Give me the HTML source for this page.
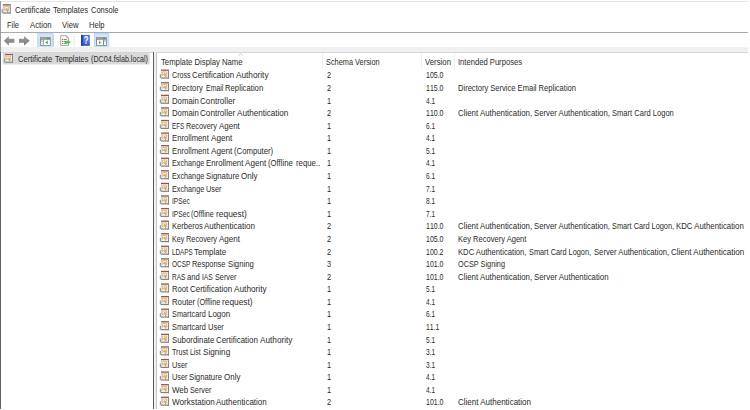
<!DOCTYPE html>
<html><head><meta charset="utf-8"><title>Certificate Templates Console</title>
<style>
html,body{margin:0;padding:0;background:#fff;}
body{width:750px;height:410px;position:relative;overflow:hidden;font-family:"Liberation Sans",sans-serif;font-size:8.2px;color:#2a2a2a;}
.abs{position:absolute;}
.c3{font-kerning:none}
.cl{position:absolute;left:0;width:750px}
.cl .t{top:0}
.t{position:absolute;white-space:nowrap;line-height:12px;height:12px;transform-origin:0 50%;}
svg{display:block}
</style></head><body>
<div class="abs" style="left:0;top:1px;width:748px;height:1px;background:#e4e4e4"></div>
<div class="abs" style="left:0;top:1px;width:1px;height:51px;background:#9c9c9c"></div>
<div class="abs" style="left:0;top:52px;width:1px;height:356.500px;background:#5f6368"></div>
<!-- title -->

<div class="cl " style="top:4px;height:12px"><span class="t" style="left:15.10px;font-size:8.7px;line-height:12px;height:12px;transform:scaleX(0.9026)">Certificate</span> <span class="t" style="left:53.40px;font-size:8.7px;line-height:12px;height:12px;transform:scaleX(0.8840)">Templates</span> <span class="t" style="left:91.40px;font-size:8.7px;line-height:12px;height:12px;transform:scaleX(0.8627)">Console</span></div>
<!-- menu -->
<div class="t " style="left:7.40px;top:20px;font-size:8.2px;line-height:11px;height:11px;transform:scaleX(0.9089)">File</div>
<div class="t " style="left:29.90px;top:20px;font-size:8.2px;line-height:11px;height:11px;transform:scaleX(0.9444)">Action</div>
<div class="t " style="left:61.90px;top:20px;font-size:8.2px;line-height:11px;height:11px;transform:scaleX(0.9370)">View</div>
<div class="t " style="left:88.90px;top:20px;font-size:8.2px;line-height:11px;height:11px;transform:scaleX(0.9202)">Help</div>
<div class="abs" style="left:1px;top:32px;width:747px;height:1px;background:#a9a9ae"></div>
<!-- toolbar -->
<svg class="abs" style="left:0;top:33px" width="120" height="16" viewBox="0 0 120 16">
 <defs><linearGradient id="ga" x1="0" y1="0" x2="0" y2="1"><stop offset="0" stop-color="#a0a0a0"/><stop offset="1" stop-color="#7a7a7a"/></linearGradient>
 <linearGradient id="gh" x1="0" y1="0" x2="0" y2="1"><stop offset="0" stop-color="#4a6edc"/><stop offset=".6" stop-color="#5278e2"/><stop offset="1" stop-color="#2c48a8"/></linearGradient></defs>
 <path d="M3.800 7.800l5-4.800v2.800h5.600v4h-5.600v2.800z" fill="url(#ga)"/>
 <path d="M29.800 7.800l-5.800-4.800v2.800h-5v4h5v2.800z" fill="url(#ga)"/>
 <rect x="33" y="1.500" width=".8" height="12.500" fill="#f0f0f0"/>
 <rect x="37.600" y="0.600" width="15" height="13.500" fill="#cfe6f9" stroke="#bcdcf6" stroke-width="1"/>
 <rect x="53.300" y="1.500" width=".7" height="12" fill="#b9b9b9"/>
 <rect x="40" y="4.200" width="10.700" height="8.600" fill="#85888c"/>
 <rect x="40.800" y="4.900" width="9.100" height="2" fill="#a3a5a8"/>
 <rect x="46.800" y="5.300" width="2.600" height=".7" fill="#5c6068"/>
 <rect x="40.900" y="7.100" width="2.300" height="4.900" fill="#fafcff"/>
 <rect x="43.900" y="7.100" width="6" height="4.900" fill="#ffffff"/>
 <rect x="41.300" y="7.700" width="1.400" height=".9" fill="#3a78d8"/><rect x="41.600" y="10.600" width="1.100" height=".9" fill="#9cc2f0"/>
 <path d="M45.300 9.400l2.500-1.800v3.600z" fill="#38b838"/>
 <path d="M60.700 2.600h5.800l2 2.100v7.900h-7.800z" fill="#fdf9e2" stroke="#a2a2a0" stroke-width=".9"/>
 <path d="M66.500 2.600v2.100h2" fill="none" stroke="#b0b0ae" stroke-width=".7"/>
 <path d="M62.100 6.500h.9M62.100 8.500h.9M62.100 10.400h.9" stroke="#55555c" stroke-width=".9"/>
 <path d="M63.700 6.500h3M63.700 8.500h3M63.700 10.400h3" stroke="#5a64a8" stroke-width=".8"/>
 <path d="M64.800 8h2.900v-1.300l3 2.400-3 2.400v-1.300h-2.900z" fill="#48c448"/>
 <rect x="73.800" y="1.200" width=".8" height="12.700" fill="#e2e2e2"/>
 <rect x="81" y="1.900" width="8.800" height="10.900" fill="url(#gh)"/>
 <rect x="81" y="1.900" width="1.900" height="10.900" fill="#2342b4"/>
 <text x="0" y="0" transform="translate(86.200 11.300) scale(.7 1)" font-size="11" font-weight="bold" text-anchor="middle" fill="#fff" font-family="Liberation Sans, sans-serif">?</text>
 <rect x="94.400" y="0.600" width="14.400" height="13.500" fill="#cfe6f9" stroke="#b4d8f6" stroke-width="1"/>
 <rect x="96" y="4.200" width="10.800" height="8.600" fill="#85888c"/>
 <rect x="96.800" y="4.900" width="9.200" height="2" fill="#a3a5a8"/>
 <rect x="102.800" y="5.300" width="2.600" height=".7" fill="#5c6068"/>
 <rect x="97" y="7.100" width="6" height="4.900" fill="#ffffff"/>
 <rect x="104" y="7.100" width="2" height="4.900" fill="#fafcff"/>
 <rect x="104.200" y="7.500" width="1.600" height="1" fill="#6a9ae4"/>
 <path d="M101.100 9.600l-2.100-1.900v3.800z" fill="#38b838"/>
</svg>
<div class="abs" style="left:1px;top:47px;width:747px;height:5px;background:#f0f0f0"></div>
<div class="abs" style="left:1px;top:52px;width:747px;height:1px;background:#d6d6da"></div>
<!-- tree -->
<svg class="abs" style="left:0;top:50px" width="152" height="16" viewBox="0 50 152 16"><rect x="2.900" y="52.900" width="146.800" height="11.600" fill="#d9d9d9"/></svg>

<div class="cl " style="top:54px;height:11px"><span class="t" style="left:17.90px;font-size:8.2px;line-height:11px;height:11px;transform:scaleX(0.9279)">Certificate</span> <span class="t" style="left:54.90px;font-size:8.2px;line-height:11px;height:11px;transform:scaleX(0.8921)">Templates</span> <span class="t" style="left:90.60px;font-size:8.2px;line-height:11px;height:11px;transform:scaleX(0.8759)">(DC04.fslab.local)</span></div>
<!-- splitter -->
<div class="abs" style="left:153px;top:52px;width:1px;height:356.500px;background:#5c5c60"></div>
<div class="abs" style="left:154px;top:52px;width:2px;height:356.500px;background:#f0f0f0"></div>
<div class="abs" style="left:156px;top:52px;width:1px;height:356.500px;background:#c2c6cc"></div>
<!-- header -->
<div class="abs" style="left:322px;top:53px;width:1px;height:16px;background:#efefef"></div>
<div class="abs" style="left:421px;top:53px;width:1px;height:16px;background:#efefef"></div>
<div class="abs" style="left:454px;top:53px;width:1px;height:16px;background:#efefef"></div>
<div class="t " style="left:160.50px;top:57px;font-size:8.2px;line-height:11px;height:11px;transform:scaleX(0.9437)">Template Display Name</div>
<div class="t " style="left:326.20px;top:57px;font-size:8.2px;line-height:11px;height:11px;transform:scaleX(0.9006)">Schema Version</div>
<div class="t " style="left:424.70px;top:57px;font-size:8.2px;line-height:11px;height:11px;transform:scaleX(0.9519)">Version</div>
<div class="t " style="left:458.40px;top:57px;font-size:8.2px;line-height:11px;height:11px;transform:scaleX(0.9311)">Intended Purposes</div>
<svg class="abs" style="left:237.500px;top:53.200px" width="5" height="3" viewBox="0 0 5 3"><path d="M.4 2.600l2.100-2 2.100 2" fill="none" stroke="#c2c2c2" stroke-width=".8"/></svg>
<div class="cl c1" style="top:70px;height:11px"><span class="t" style="left:171.60px;font-size:8.2px;line-height:11px;height:11px;transform:scaleX(0.8742)">Cross</span> <span class="t" style="left:192.40px;font-size:8.2px;line-height:11px;height:11px;transform:scaleX(0.9761)">Certification</span> <span class="t" style="left:235.90px;font-size:8.2px;line-height:11px;height:11px;transform:scaleX(1.0058)">Authority</span></div>
<div class="t c2" style="left:326.70px;top:70px;font-size:8.2px;line-height:11px;height:11px;transform:scaleX(0.8986)">2</div>
<div class="t c3" style="left:425.50px;top:70px;font-size:8.2px;line-height:11px;height:11px;transform:scaleX(0.8537)">105.0</div>
<div class="cl c1" style="top:83px;height:11px"><span class="t" style="left:171.60px;font-size:8.2px;line-height:11px;height:11px;transform:scaleX(0.9400)">Directory</span> <span class="t" style="left:205.60px;font-size:8.2px;line-height:11px;height:11px;transform:scaleX(0.8494)">Email</span> <span class="t" style="left:225.20px;font-size:8.2px;line-height:11px;height:11px;transform:scaleX(0.9428)">Replication</span></div>
<div class="t c2" style="left:326.70px;top:83px;font-size:8.2px;line-height:11px;height:11px;transform:scaleX(0.8986)">2</div>
<div class="t c3" style="left:425.50px;top:83px;font-size:8.2px;line-height:11px;height:11px;transform:scaleX(0.8537)">115.0</div>
<div class="t c4" style="left:458.40px;top:83px;font-size:8.2px;line-height:11px;height:11px;transform:scaleX(0.9229)">Directory Service Email Replication</div>
<div class="cl c1" style="top:96px;height:11px"><span class="t" style="left:171.60px;font-size:8.2px;line-height:11px;height:11px;transform:scaleX(0.9497)">Domain</span> <span class="t" style="left:200.20px;font-size:8.2px;line-height:11px;height:11px;transform:scaleX(0.9915)">Controller</span></div>
<div class="t c2" style="left:326.70px;top:96px;font-size:8.2px;line-height:11px;height:11px;transform:scaleX(0.8986)">1</div>
<div class="t c3" style="left:425.50px;top:96px;font-size:8.2px;line-height:11px;height:11px;transform:scaleX(0.7989)">4.1</div>
<div class="cl c1" style="top:108px;height:11px"><span class="t" style="left:171.60px;font-size:8.2px;line-height:11px;height:11px;transform:scaleX(0.9497)">Domain</span> <span class="t" style="left:200.20px;font-size:8.2px;line-height:11px;height:11px;transform:scaleX(0.9915)">Controller</span> <span class="t" style="left:236.60px;font-size:8.2px;line-height:11px;height:11px;transform:scaleX(0.9902)">Authentication</span></div>
<div class="t c2" style="left:326.70px;top:108px;font-size:8.2px;line-height:11px;height:11px;transform:scaleX(0.8986)">2</div>
<div class="t c3" style="left:425.50px;top:108px;font-size:8.2px;line-height:11px;height:11px;transform:scaleX(0.8537)">110.0</div>
<div class="cl c4" style="top:108px;height:11px"><span class="t" style="left:458.30px;font-size:8.2px;line-height:11px;height:11px;transform:scaleX(0.9633)">Client Authentication,</span> <span class="t" style="left:533.90px;font-size:8.2px;line-height:11px;height:11px;transform:scaleX(0.9475)">Server Authentication,</span> <span class="t" style="left:611.70px;font-size:8.2px;line-height:11px;height:11px;transform:scaleX(0.9237)">Smart Card Logon</span></div>
<div class="cl c1" style="top:121px;height:11px"><span class="t" style="left:171.60px;font-size:8.2px;line-height:11px;height:11px;transform:scaleX(0.7655)">EFS</span> <span class="t" style="left:185.60px;font-size:8.2px;line-height:11px;height:11px;transform:scaleX(0.8903)">Recovery</span> <span class="t" style="left:218.60px;font-size:8.2px;line-height:11px;height:11px;transform:scaleX(0.9717)">Agent</span></div>
<div class="t c2" style="left:326.70px;top:121px;font-size:8.2px;line-height:11px;height:11px;transform:scaleX(0.8986)">1</div>
<div class="t c3" style="left:425.50px;top:121px;font-size:8.2px;line-height:11px;height:11px;transform:scaleX(0.7989)">6.1</div>
<div class="cl c1" style="top:133px;height:11px"><span class="t" style="left:171.60px;font-size:8.2px;line-height:11px;height:11px;transform:scaleX(0.9402)">Enrollment</span> <span class="t" style="left:210.60px;font-size:8.2px;line-height:11px;height:11px;transform:scaleX(0.9997)">Agent</span></div>
<div class="t c2" style="left:326.70px;top:133px;font-size:8.2px;line-height:11px;height:11px;transform:scaleX(0.8986)">1</div>
<div class="t c3" style="left:425.50px;top:133px;font-size:8.2px;line-height:11px;height:11px;transform:scaleX(0.7989)">4.1</div>
<div class="cl c1" style="top:146px;height:11px"><span class="t" style="left:171.60px;font-size:8.2px;line-height:11px;height:11px;transform:scaleX(0.9402)">Enrollment</span> <span class="t" style="left:210.60px;font-size:8.2px;line-height:11px;height:11px;transform:scaleX(0.9997)">Agent</span> <span class="t" style="left:233.60px;font-size:8.2px;line-height:11px;height:11px;transform:scaleX(0.9467)">(Computer)</span></div>
<div class="t c2" style="left:326.70px;top:146px;font-size:8.2px;line-height:11px;height:11px;transform:scaleX(0.8986)">1</div>
<div class="t c3" style="left:425.50px;top:146px;font-size:8.2px;line-height:11px;height:11px;transform:scaleX(0.7989)">5.1</div>
<div class="cl c1" style="top:158px;height:11px"><span class="t" style="left:171.60px;font-size:8.2px;line-height:11px;height:11px;transform:scaleX(0.8841)">Exchange</span> <span class="t" style="left:206.00px;font-size:8.2px;line-height:11px;height:11px;transform:scaleX(0.9555)">Enrollment</span> <span class="t" style="left:245.20px;font-size:8.2px;line-height:11px;height:11px;transform:scaleX(0.9904)">Agent</span> <span class="t" style="left:268.00px;font-size:8.2px;line-height:11px;height:11px;transform:scaleX(0.9448)">(Offline</span> <span class="t" style="left:296.20px;font-size:8.2px;line-height:11px;height:11px;transform:scaleX(0.9490)">reque..</span></div>
<div class="t c2" style="left:326.70px;top:158px;font-size:8.2px;line-height:11px;height:11px;transform:scaleX(0.8986)">1</div>
<div class="t c3" style="left:425.50px;top:158px;font-size:8.2px;line-height:11px;height:11px;transform:scaleX(0.7989)">4.1</div>
<div class="cl c1" style="top:171px;height:11px"><span class="t" style="left:171.60px;font-size:8.2px;line-height:11px;height:11px;transform:scaleX(0.8841)">Exchange</span> <span class="t" style="left:206.00px;font-size:8.2px;line-height:11px;height:11px;transform:scaleX(0.9526)">Signature</span> <span class="t" style="left:241.20px;font-size:8.2px;line-height:11px;height:11px;transform:scaleX(0.9855)">Only</span></div>
<div class="t c2" style="left:326.70px;top:171px;font-size:8.2px;line-height:11px;height:11px;transform:scaleX(0.8986)">1</div>
<div class="t c3" style="left:425.50px;top:171px;font-size:8.2px;line-height:11px;height:11px;transform:scaleX(0.7989)">6.1</div>
<div class="cl c1" style="top:184px;height:11px"><span class="t" style="left:171.60px;font-size:8.2px;line-height:11px;height:11px;transform:scaleX(0.8841)">Exchange</span> <span class="t" style="left:206.00px;font-size:8.2px;line-height:11px;height:11px;transform:scaleX(0.8903)">User</span></div>
<div class="t c2" style="left:326.70px;top:184px;font-size:8.2px;line-height:11px;height:11px;transform:scaleX(0.8986)">1</div>
<div class="t c3" style="left:425.50px;top:184px;font-size:8.2px;line-height:11px;height:11px;transform:scaleX(0.7989)">7.1</div>
<div class="cl c1" style="top:196px;height:11px"><span class="t" style="left:171.60px;font-size:8.2px;line-height:11px;height:11px;transform:scaleX(0.8143)">IPSec</span></div>
<div class="t c2" style="left:326.70px;top:196px;font-size:8.2px;line-height:11px;height:11px;transform:scaleX(0.8986)">1</div>
<div class="t c3" style="left:425.50px;top:196px;font-size:8.2px;line-height:11px;height:11px;transform:scaleX(0.7989)">8.1</div>
<div class="cl c1" style="top:209px;height:11px"><span class="t" style="left:171.60px;font-size:8.2px;line-height:11px;height:11px;transform:scaleX(0.8143)">IPSec</span> <span class="t" style="left:191.20px;font-size:8.2px;line-height:11px;height:11px;transform:scaleX(0.8610)">(Offline</span> <span class="t" style="left:216.20px;font-size:8.2px;line-height:11px;height:11px;transform:scaleX(1.0251)">request)</span></div>
<div class="t c2" style="left:326.70px;top:209px;font-size:8.2px;line-height:11px;height:11px;transform:scaleX(0.8986)">1</div>
<div class="t c3" style="left:425.50px;top:209px;font-size:8.2px;line-height:11px;height:11px;transform:scaleX(0.7989)">7.1</div>
<div class="cl c1" style="top:221px;height:11px"><span class="t" style="left:171.60px;font-size:8.2px;line-height:11px;height:11px;transform:scaleX(0.9268)">Kerberos</span> <span class="t" style="left:204.00px;font-size:8.2px;line-height:11px;height:11px;transform:scaleX(0.9825)">Authentication</span></div>
<div class="t c2" style="left:326.70px;top:221px;font-size:8.2px;line-height:11px;height:11px;transform:scaleX(0.8986)">2</div>
<div class="t c3" style="left:425.50px;top:221px;font-size:8.2px;line-height:11px;height:11px;transform:scaleX(0.8537)">110.0</div>
<div class="cl c4" style="top:221px;height:11px"><span class="t" style="left:458.30px;font-size:8.2px;line-height:11px;height:11px;transform:scaleX(0.9633)">Client Authentication,</span> <span class="t" style="left:533.90px;font-size:8.2px;line-height:11px;height:11px;transform:scaleX(0.9475)">Server Authentication,</span> <span class="t" style="left:611.70px;font-size:8.2px;line-height:11px;height:11px;transform:scaleX(0.8976)">Smart Card Logon,</span> <span class="t" style="left:676.30px;font-size:8.2px;line-height:11px;height:11px;transform:scaleX(0.9547)">KDC Authentication</span></div>
<div class="cl c1" style="top:234px;height:11px"><span class="t" style="left:171.60px;font-size:8.2px;line-height:11px;height:11px;transform:scaleX(0.8647)">Key</span> <span class="t" style="left:186.00px;font-size:8.2px;line-height:11px;height:11px;transform:scaleX(0.8961)">Recovery</span> <span class="t" style="left:219.00px;font-size:8.2px;line-height:11px;height:11px;transform:scaleX(0.9810)">Agent</span></div>
<div class="t c2" style="left:326.70px;top:234px;font-size:8.2px;line-height:11px;height:11px;transform:scaleX(0.8986)">2</div>
<div class="t c3" style="left:425.50px;top:234px;font-size:8.2px;line-height:11px;height:11px;transform:scaleX(0.8537)">105.0</div>
<div class="t c4" style="left:458.40px;top:234px;font-size:8.2px;line-height:11px;height:11px;transform:scaleX(0.9220)">Key Recovery Agent</div>
<div class="cl c1" style="top:247px;height:11px"><span class="t" style="left:171.60px;font-size:8.2px;line-height:11px;height:11px;transform:scaleX(0.7744)">LDAPS</span> <span class="t" style="left:194.20px;font-size:8.2px;line-height:11px;height:11px;transform:scaleX(0.9689)">Template</span></div>
<div class="t c2" style="left:326.70px;top:247px;font-size:8.2px;line-height:11px;height:11px;transform:scaleX(0.8986)">2</div>
<div class="t c3" style="left:425.50px;top:247px;font-size:8.2px;line-height:11px;height:11px;transform:scaleX(0.8537)">100.2</div>
<div class="cl c4" style="top:247px;height:11px"><span class="t" style="left:458.30px;font-size:8.2px;line-height:11px;height:11px;transform:scaleX(0.9348)">KDC Authentication,</span> <span class="t" style="left:528.70px;font-size:8.2px;line-height:11px;height:11px;transform:scaleX(0.8976)">Smart Card Logon,</span> <span class="t" style="left:593.70px;font-size:8.2px;line-height:11px;height:11px;transform:scaleX(0.9375)">Server Authentication,</span> <span class="t" style="left:670.90px;font-size:8.2px;line-height:11px;height:11px;transform:scaleX(0.9805)">Client Authentication</span></div>
<div class="cl c1" style="top:259px;height:11px"><span class="t" style="left:171.60px;font-size:8.2px;line-height:11px;height:11px;transform:scaleX(0.7925)">OCSP</span> <span class="t" style="left:192.00px;font-size:8.2px;line-height:11px;height:11px;transform:scaleX(0.9058)">Response</span> <span class="t" style="left:227.60px;font-size:8.2px;line-height:11px;height:11px;transform:scaleX(0.9441)">Signing</span></div>
<div class="t c2" style="left:326.70px;top:259px;font-size:8.2px;line-height:11px;height:11px;transform:scaleX(0.8986)">3</div>
<div class="t c3" style="left:425.50px;top:259px;font-size:8.2px;line-height:11px;height:11px;transform:scaleX(0.8537)">101.0</div>
<div class="t c4" style="left:458.40px;top:259px;font-size:8.2px;line-height:11px;height:11px;transform:scaleX(0.8926)">OCSP Signing</div>
<div class="cl c1" style="top:272px;height:11px"><span class="t" style="left:171.60px;font-size:8.2px;line-height:11px;height:11px;transform:scaleX(0.7955)">RAS</span> <span class="t" style="left:187.00px;font-size:8.2px;line-height:11px;height:11px;transform:scaleX(0.9362)">and</span> <span class="t" style="left:202.00px;font-size:8.2px;line-height:11px;height:11px;transform:scaleX(0.8180)">IAS</span> <span class="t" style="left:214.60px;font-size:8.2px;line-height:11px;height:11px;transform:scaleX(0.8870)">Server</span></div>
<div class="t c2" style="left:326.70px;top:272px;font-size:8.2px;line-height:11px;height:11px;transform:scaleX(0.8986)">2</div>
<div class="t c3" style="left:425.50px;top:272px;font-size:8.2px;line-height:11px;height:11px;transform:scaleX(0.8537)">101.0</div>
<div class="cl c4" style="top:272px;height:11px"><span class="t" style="left:458.30px;font-size:8.2px;line-height:11px;height:11px;transform:scaleX(0.9633)">Client Authentication,</span> <span class="t" style="left:533.90px;font-size:8.2px;line-height:11px;height:11px;transform:scaleX(0.9583)">Server Authentication</span></div>
<div class="cl c1" style="top:284px;height:11px"><span class="t" style="left:171.60px;font-size:8.2px;line-height:11px;height:11px;transform:scaleX(0.9308)">Root</span> <span class="t" style="left:189.90px;font-size:8.2px;line-height:11px;height:11px;transform:scaleX(0.9738)">Certification</span> <span class="t" style="left:233.80px;font-size:8.2px;line-height:11px;height:11px;transform:scaleX(1.0089)">Authority</span></div>
<div class="t c2" style="left:326.70px;top:284px;font-size:8.2px;line-height:11px;height:11px;transform:scaleX(0.8986)">1</div>
<div class="t c3" style="left:425.50px;top:284px;font-size:8.2px;line-height:11px;height:11px;transform:scaleX(0.7989)">5.1</div>
<div class="cl c1" style="top:297px;height:11px"><span class="t" style="left:171.60px;font-size:8.2px;line-height:11px;height:11px;transform:scaleX(0.9439)">Router</span> <span class="t" style="left:196.60px;font-size:8.2px;line-height:11px;height:11px;transform:scaleX(0.8838)">(Offline</span> <span class="t" style="left:222.20px;font-size:8.2px;line-height:11px;height:11px;transform:scaleX(1.0184)">request)</span></div>
<div class="t c2" style="left:326.70px;top:297px;font-size:8.2px;line-height:11px;height:11px;transform:scaleX(0.8986)">1</div>
<div class="t c3" style="left:425.50px;top:297px;font-size:8.2px;line-height:11px;height:11px;transform:scaleX(0.7989)">4.1</div>
<div class="cl c1" style="top:309px;height:11px"><span class="t" style="left:171.60px;font-size:8.2px;line-height:11px;height:11px;transform:scaleX(0.8950)">Smartcard</span> <span class="t" style="left:207.60px;font-size:8.2px;line-height:11px;height:11px;transform:scaleX(0.9745)">Logon</span></div>
<div class="t c2" style="left:326.70px;top:309px;font-size:8.2px;line-height:11px;height:11px;transform:scaleX(0.8986)">1</div>
<div class="t c3" style="left:425.50px;top:309px;font-size:8.2px;line-height:11px;height:11px;transform:scaleX(0.7989)">6.1</div>
<div class="cl c1" style="top:322px;height:11px"><span class="t" style="left:171.60px;font-size:8.2px;line-height:11px;height:11px;transform:scaleX(0.8950)">Smartcard</span> <span class="t" style="left:207.60px;font-size:8.2px;line-height:11px;height:11px;transform:scaleX(0.9135)">User</span></div>
<div class="t c2" style="left:326.70px;top:322px;font-size:8.2px;line-height:11px;height:11px;transform:scaleX(0.8986)">1</div>
<div class="t c3" style="left:425.50px;top:322px;font-size:8.2px;line-height:11px;height:11px;transform:scaleX(0.8282)">11.1</div>
<div class="cl c1" style="top:335px;height:11px"><span class="t" style="left:171.60px;font-size:8.2px;line-height:11px;height:11px;transform:scaleX(0.9602)">Subordinate</span> <span class="t" style="left:216.00px;font-size:8.2px;line-height:11px;height:11px;transform:scaleX(0.9668)">Certification</span> <span class="t" style="left:259.60px;font-size:8.2px;line-height:11px;height:11px;transform:scaleX(1.0027)">Authority</span></div>
<div class="t c2" style="left:326.70px;top:335px;font-size:8.2px;line-height:11px;height:11px;transform:scaleX(0.8986)">1</div>
<div class="t c3" style="left:425.50px;top:335px;font-size:8.2px;line-height:11px;height:11px;transform:scaleX(0.7989)">5.1</div>
<div class="cl c1" style="top:347px;height:11px"><span class="t" style="left:171.60px;font-size:8.2px;line-height:11px;height:11px;transform:scaleX(0.8715)">Trust</span> <span class="t" style="left:189.80px;font-size:8.2px;line-height:11px;height:11px;transform:scaleX(0.8314)">List</span> <span class="t" style="left:202.60px;font-size:8.2px;line-height:11px;height:11px;transform:scaleX(0.9953)">Signing</span></div>
<div class="t c2" style="left:326.70px;top:347px;font-size:8.2px;line-height:11px;height:11px;transform:scaleX(0.8986)">1</div>
<div class="t c3" style="left:425.50px;top:347px;font-size:8.2px;line-height:11px;height:11px;transform:scaleX(0.7989)">3.1</div>
<div class="cl c1" style="top:360px;height:11px"><span class="t" style="left:171.60px;font-size:8.2px;line-height:11px;height:11px;transform:scaleX(0.8903)">User</span></div>
<div class="t c2" style="left:326.70px;top:360px;font-size:8.2px;line-height:11px;height:11px;transform:scaleX(0.8986)">1</div>
<div class="t c3" style="left:425.50px;top:360px;font-size:8.2px;line-height:11px;height:11px;transform:scaleX(0.7989)">3.1</div>
<div class="cl c1" style="top:372px;height:11px"><span class="t" style="left:171.60px;font-size:8.2px;line-height:11px;height:11px;transform:scaleX(0.8903)">User</span> <span class="t" style="left:189.00px;font-size:8.2px;line-height:11px;height:11px;transform:scaleX(0.9412)">Signature</span> <span class="t" style="left:224.00px;font-size:8.2px;line-height:11px;height:11px;transform:scaleX(0.9737)">Only</span></div>
<div class="t c2" style="left:326.70px;top:372px;font-size:8.2px;line-height:11px;height:11px;transform:scaleX(0.8986)">1</div>
<div class="t c3" style="left:425.50px;top:372px;font-size:8.2px;line-height:11px;height:11px;transform:scaleX(0.7989)">4.1</div>
<div class="cl c1" style="top:385px;height:11px"><span class="t" style="left:171.60px;font-size:8.2px;line-height:11px;height:11px;transform:scaleX(0.9708)">Web</span> <span class="t" style="left:189.60px;font-size:8.2px;line-height:11px;height:11px;transform:scaleX(0.8870)">Server</span></div>
<div class="t c2" style="left:326.70px;top:385px;font-size:8.2px;line-height:11px;height:11px;transform:scaleX(0.8986)">1</div>
<div class="t c3" style="left:425.50px;top:385px;font-size:8.2px;line-height:11px;height:11px;transform:scaleX(0.7989)">4.1</div>
<div class="cl c1" style="top:397px;height:11px"><span class="t" style="left:171.60px;font-size:8.2px;line-height:11px;height:11px;transform:scaleX(0.9935)">Workstation</span> <span class="t" style="left:216.20px;font-size:8.2px;line-height:11px;height:11px;transform:scaleX(0.9787)">Authentication</span></div>
<div class="t c2" style="left:326.70px;top:397px;font-size:8.2px;line-height:11px;height:11px;transform:scaleX(0.8986)">2</div>
<div class="t c3" style="left:425.50px;top:397px;font-size:8.2px;line-height:11px;height:11px;transform:scaleX(0.8537)">101.0</div>
<div class="t c4" style="left:458.40px;top:397px;font-size:8.2px;line-height:11px;height:11px;transform:scaleX(0.9778)">Client Authentication</div>
<svg class="abs" style="left:0;top:0" width="750" height="410" viewBox="0 0 750 410"><g transform="translate(159.60 69.17) scale(1 1.077)"><path d="M0.200 4.700h1.400v3.600h-1.400z" fill="#939393"/><rect x="1.400" y="0.400" width="8" height="8.400" fill="#f1f1f1"/><rect x="1.400" y="0.350" width="8" height="1.200" fill="#a25640"/><path d="M1.400 8.250h8" stroke="#808080" stroke-width="1.100"/><path d="M8.900 1.550v7.250" stroke="#868686" stroke-width="1"/><path d="M1.700 1.550v6.200" stroke="#c2c2c2" stroke-width=".6"/><path d="M2.750 6.500v-3.900h4.300v3.900" fill="#f7f9fc" stroke="#c4a67e" stroke-width=".7"/><path d="M3.300 5.250h3.300" stroke="#9a7d52" stroke-width=".45"/><ellipse cx="5.200" cy="5" rx="1.250" ry="1.350" fill="#f1b31c"/><rect x="5.600" y="6.300" width=".9" height=".8" fill="#2f6fe0"/></g>
<g transform="translate(159.60 81.75) scale(1 1.077)"><path d="M0.200 4.700h1.400v3.600h-1.400z" fill="#939393"/><rect x="1.400" y="0.400" width="8" height="8.400" fill="#f1f1f1"/><rect x="1.400" y="0.350" width="8" height="1.200" fill="#a25640"/><path d="M1.400 8.250h8" stroke="#808080" stroke-width="1.100"/><path d="M8.900 1.550v7.250" stroke="#868686" stroke-width="1"/><path d="M1.700 1.550v6.200" stroke="#c2c2c2" stroke-width=".6"/><path d="M2.750 6.500v-3.900h4.300v3.900" fill="#f7f9fc" stroke="#c4a67e" stroke-width=".7"/><path d="M3.300 5.250h3.300" stroke="#9a7d52" stroke-width=".45"/><ellipse cx="5.200" cy="5" rx="1.250" ry="1.350" fill="#f1b31c"/><rect x="5.600" y="6.300" width=".9" height=".8" fill="#2f6fe0"/></g>
<g transform="translate(159.60 94.33) scale(1 1.077)"><path d="M0.200 4.700h1.400v3.600h-1.400z" fill="#939393"/><rect x="1.400" y="0.400" width="8" height="8.400" fill="#f1f1f1"/><rect x="1.400" y="0.350" width="8" height="1.200" fill="#a25640"/><path d="M1.400 8.250h8" stroke="#808080" stroke-width="1.100"/><path d="M8.900 1.550v7.250" stroke="#868686" stroke-width="1"/><path d="M1.700 1.550v6.200" stroke="#c2c2c2" stroke-width=".6"/><path d="M2.750 6.500v-3.900h4.300v3.900" fill="#f7f9fc" stroke="#c4a67e" stroke-width=".7"/><path d="M3.300 5.250h3.300" stroke="#9a7d52" stroke-width=".45"/><ellipse cx="5.200" cy="5" rx="1.250" ry="1.350" fill="#f1b31c"/><rect x="5.600" y="6.300" width=".9" height=".8" fill="#2f6fe0"/></g>
<g transform="translate(159.60 106.91) scale(1 1.077)"><path d="M0.200 4.700h1.400v3.600h-1.400z" fill="#939393"/><rect x="1.400" y="0.400" width="8" height="8.400" fill="#f1f1f1"/><rect x="1.400" y="0.350" width="8" height="1.200" fill="#a25640"/><path d="M1.400 8.250h8" stroke="#808080" stroke-width="1.100"/><path d="M8.900 1.550v7.250" stroke="#868686" stroke-width="1"/><path d="M1.700 1.550v6.200" stroke="#c2c2c2" stroke-width=".6"/><path d="M2.750 6.500v-3.900h4.300v3.900" fill="#f7f9fc" stroke="#c4a67e" stroke-width=".7"/><path d="M3.300 5.250h3.300" stroke="#9a7d52" stroke-width=".45"/><ellipse cx="5.200" cy="5" rx="1.250" ry="1.350" fill="#f1b31c"/><rect x="5.600" y="6.300" width=".9" height=".8" fill="#2f6fe0"/></g>
<g transform="translate(159.60 119.49) scale(1 1.077)"><path d="M0.200 4.700h1.400v3.600h-1.400z" fill="#939393"/><rect x="1.400" y="0.400" width="8" height="8.400" fill="#f1f1f1"/><rect x="1.400" y="0.350" width="8" height="1.200" fill="#a25640"/><path d="M1.400 8.250h8" stroke="#808080" stroke-width="1.100"/><path d="M8.900 1.550v7.250" stroke="#868686" stroke-width="1"/><path d="M1.700 1.550v6.200" stroke="#c2c2c2" stroke-width=".6"/><path d="M2.750 6.500v-3.900h4.300v3.900" fill="#f7f9fc" stroke="#c4a67e" stroke-width=".7"/><path d="M3.300 5.250h3.300" stroke="#9a7d52" stroke-width=".45"/><ellipse cx="5.200" cy="5" rx="1.250" ry="1.350" fill="#f1b31c"/><rect x="5.600" y="6.300" width=".9" height=".8" fill="#2f6fe0"/></g>
<g transform="translate(159.60 132.07) scale(1 1.077)"><path d="M0.200 4.700h1.400v3.600h-1.400z" fill="#939393"/><rect x="1.400" y="0.400" width="8" height="8.400" fill="#f1f1f1"/><rect x="1.400" y="0.350" width="8" height="1.200" fill="#a25640"/><path d="M1.400 8.250h8" stroke="#808080" stroke-width="1.100"/><path d="M8.900 1.550v7.250" stroke="#868686" stroke-width="1"/><path d="M1.700 1.550v6.200" stroke="#c2c2c2" stroke-width=".6"/><path d="M2.750 6.500v-3.900h4.300v3.900" fill="#f7f9fc" stroke="#c4a67e" stroke-width=".7"/><path d="M3.300 5.250h3.300" stroke="#9a7d52" stroke-width=".45"/><ellipse cx="5.200" cy="5" rx="1.250" ry="1.350" fill="#f1b31c"/><rect x="5.600" y="6.300" width=".9" height=".8" fill="#2f6fe0"/></g>
<g transform="translate(159.60 144.65) scale(1 1.077)"><path d="M0.200 4.700h1.400v3.600h-1.400z" fill="#939393"/><rect x="1.400" y="0.400" width="8" height="8.400" fill="#f1f1f1"/><rect x="1.400" y="0.350" width="8" height="1.200" fill="#a25640"/><path d="M1.400 8.250h8" stroke="#808080" stroke-width="1.100"/><path d="M8.900 1.550v7.250" stroke="#868686" stroke-width="1"/><path d="M1.700 1.550v6.200" stroke="#c2c2c2" stroke-width=".6"/><path d="M2.750 6.500v-3.900h4.300v3.900" fill="#f7f9fc" stroke="#c4a67e" stroke-width=".7"/><path d="M3.300 5.250h3.300" stroke="#9a7d52" stroke-width=".45"/><ellipse cx="5.200" cy="5" rx="1.250" ry="1.350" fill="#f1b31c"/><rect x="5.600" y="6.300" width=".9" height=".8" fill="#2f6fe0"/></g>
<g transform="translate(159.60 157.23) scale(1 1.077)"><path d="M0.200 4.700h1.400v3.600h-1.400z" fill="#939393"/><rect x="1.400" y="0.400" width="8" height="8.400" fill="#f1f1f1"/><rect x="1.400" y="0.350" width="8" height="1.200" fill="#a25640"/><path d="M1.400 8.250h8" stroke="#808080" stroke-width="1.100"/><path d="M8.900 1.550v7.250" stroke="#868686" stroke-width="1"/><path d="M1.700 1.550v6.200" stroke="#c2c2c2" stroke-width=".6"/><path d="M2.750 6.500v-3.900h4.300v3.900" fill="#f7f9fc" stroke="#c4a67e" stroke-width=".7"/><path d="M3.300 5.250h3.300" stroke="#9a7d52" stroke-width=".45"/><ellipse cx="5.200" cy="5" rx="1.250" ry="1.350" fill="#f1b31c"/><rect x="5.600" y="6.300" width=".9" height=".8" fill="#2f6fe0"/></g>
<g transform="translate(159.60 169.81) scale(1 1.077)"><path d="M0.200 4.700h1.400v3.600h-1.400z" fill="#939393"/><rect x="1.400" y="0.400" width="8" height="8.400" fill="#f1f1f1"/><rect x="1.400" y="0.350" width="8" height="1.200" fill="#a25640"/><path d="M1.400 8.250h8" stroke="#808080" stroke-width="1.100"/><path d="M8.900 1.550v7.250" stroke="#868686" stroke-width="1"/><path d="M1.700 1.550v6.200" stroke="#c2c2c2" stroke-width=".6"/><path d="M2.750 6.500v-3.900h4.300v3.900" fill="#f7f9fc" stroke="#c4a67e" stroke-width=".7"/><path d="M3.300 5.250h3.300" stroke="#9a7d52" stroke-width=".45"/><ellipse cx="5.200" cy="5" rx="1.250" ry="1.350" fill="#f1b31c"/><rect x="5.600" y="6.300" width=".9" height=".8" fill="#2f6fe0"/></g>
<g transform="translate(159.60 182.39) scale(1 1.077)"><path d="M0.200 4.700h1.400v3.600h-1.400z" fill="#939393"/><rect x="1.400" y="0.400" width="8" height="8.400" fill="#f1f1f1"/><rect x="1.400" y="0.350" width="8" height="1.200" fill="#a25640"/><path d="M1.400 8.250h8" stroke="#808080" stroke-width="1.100"/><path d="M8.900 1.550v7.250" stroke="#868686" stroke-width="1"/><path d="M1.700 1.550v6.200" stroke="#c2c2c2" stroke-width=".6"/><path d="M2.750 6.500v-3.900h4.300v3.900" fill="#f7f9fc" stroke="#c4a67e" stroke-width=".7"/><path d="M3.300 5.250h3.300" stroke="#9a7d52" stroke-width=".45"/><ellipse cx="5.200" cy="5" rx="1.250" ry="1.350" fill="#f1b31c"/><rect x="5.600" y="6.300" width=".9" height=".8" fill="#2f6fe0"/></g>
<g transform="translate(159.60 194.97) scale(1 1.077)"><path d="M0.200 4.700h1.400v3.600h-1.400z" fill="#939393"/><rect x="1.400" y="0.400" width="8" height="8.400" fill="#f1f1f1"/><rect x="1.400" y="0.350" width="8" height="1.200" fill="#a25640"/><path d="M1.400 8.250h8" stroke="#808080" stroke-width="1.100"/><path d="M8.900 1.550v7.250" stroke="#868686" stroke-width="1"/><path d="M1.700 1.550v6.200" stroke="#c2c2c2" stroke-width=".6"/><path d="M2.750 6.500v-3.900h4.300v3.900" fill="#f7f9fc" stroke="#c4a67e" stroke-width=".7"/><path d="M3.300 5.250h3.300" stroke="#9a7d52" stroke-width=".45"/><ellipse cx="5.200" cy="5" rx="1.250" ry="1.350" fill="#f1b31c"/><rect x="5.600" y="6.300" width=".9" height=".8" fill="#2f6fe0"/></g>
<g transform="translate(159.60 207.55) scale(1 1.077)"><path d="M0.200 4.700h1.400v3.600h-1.400z" fill="#939393"/><rect x="1.400" y="0.400" width="8" height="8.400" fill="#f1f1f1"/><rect x="1.400" y="0.350" width="8" height="1.200" fill="#a25640"/><path d="M1.400 8.250h8" stroke="#808080" stroke-width="1.100"/><path d="M8.900 1.550v7.250" stroke="#868686" stroke-width="1"/><path d="M1.700 1.550v6.200" stroke="#c2c2c2" stroke-width=".6"/><path d="M2.750 6.500v-3.900h4.300v3.900" fill="#f7f9fc" stroke="#c4a67e" stroke-width=".7"/><path d="M3.300 5.250h3.300" stroke="#9a7d52" stroke-width=".45"/><ellipse cx="5.200" cy="5" rx="1.250" ry="1.350" fill="#f1b31c"/><rect x="5.600" y="6.300" width=".9" height=".8" fill="#2f6fe0"/></g>
<g transform="translate(159.60 220.13) scale(1 1.077)"><path d="M0.200 4.700h1.400v3.600h-1.400z" fill="#939393"/><rect x="1.400" y="0.400" width="8" height="8.400" fill="#f1f1f1"/><rect x="1.400" y="0.350" width="8" height="1.200" fill="#a25640"/><path d="M1.400 8.250h8" stroke="#808080" stroke-width="1.100"/><path d="M8.900 1.550v7.250" stroke="#868686" stroke-width="1"/><path d="M1.700 1.550v6.200" stroke="#c2c2c2" stroke-width=".6"/><path d="M2.750 6.500v-3.900h4.300v3.900" fill="#f7f9fc" stroke="#c4a67e" stroke-width=".7"/><path d="M3.300 5.250h3.300" stroke="#9a7d52" stroke-width=".45"/><ellipse cx="5.200" cy="5" rx="1.250" ry="1.350" fill="#f1b31c"/><rect x="5.600" y="6.300" width=".9" height=".8" fill="#2f6fe0"/></g>
<g transform="translate(159.60 232.71) scale(1 1.077)"><path d="M0.200 4.700h1.400v3.600h-1.400z" fill="#939393"/><rect x="1.400" y="0.400" width="8" height="8.400" fill="#f1f1f1"/><rect x="1.400" y="0.350" width="8" height="1.200" fill="#a25640"/><path d="M1.400 8.250h8" stroke="#808080" stroke-width="1.100"/><path d="M8.900 1.550v7.250" stroke="#868686" stroke-width="1"/><path d="M1.700 1.550v6.200" stroke="#c2c2c2" stroke-width=".6"/><path d="M2.750 6.500v-3.900h4.300v3.900" fill="#f7f9fc" stroke="#c4a67e" stroke-width=".7"/><path d="M3.300 5.250h3.300" stroke="#9a7d52" stroke-width=".45"/><ellipse cx="5.200" cy="5" rx="1.250" ry="1.350" fill="#f1b31c"/><rect x="5.600" y="6.300" width=".9" height=".8" fill="#2f6fe0"/></g>
<g transform="translate(159.60 245.29) scale(1 1.077)"><path d="M0.200 4.700h1.400v3.600h-1.400z" fill="#939393"/><rect x="1.400" y="0.400" width="8" height="8.400" fill="#f1f1f1"/><rect x="1.400" y="0.350" width="8" height="1.200" fill="#a25640"/><path d="M1.400 8.250h8" stroke="#808080" stroke-width="1.100"/><path d="M8.900 1.550v7.250" stroke="#868686" stroke-width="1"/><path d="M1.700 1.550v6.200" stroke="#c2c2c2" stroke-width=".6"/><path d="M2.750 6.500v-3.900h4.300v3.900" fill="#f7f9fc" stroke="#c4a67e" stroke-width=".7"/><path d="M3.300 5.250h3.300" stroke="#9a7d52" stroke-width=".45"/><ellipse cx="5.200" cy="5" rx="1.250" ry="1.350" fill="#f1b31c"/><rect x="5.600" y="6.300" width=".9" height=".8" fill="#2f6fe0"/></g>
<g transform="translate(159.60 257.87) scale(1 1.077)"><path d="M0.200 4.700h1.400v3.600h-1.400z" fill="#939393"/><rect x="1.400" y="0.400" width="8" height="8.400" fill="#f1f1f1"/><rect x="1.400" y="0.350" width="8" height="1.200" fill="#a25640"/><path d="M1.400 8.250h8" stroke="#808080" stroke-width="1.100"/><path d="M8.900 1.550v7.250" stroke="#868686" stroke-width="1"/><path d="M1.700 1.550v6.200" stroke="#c2c2c2" stroke-width=".6"/><path d="M2.750 6.500v-3.900h4.300v3.900" fill="#f7f9fc" stroke="#c4a67e" stroke-width=".7"/><path d="M3.300 5.250h3.300" stroke="#9a7d52" stroke-width=".45"/><ellipse cx="5.200" cy="5" rx="1.250" ry="1.350" fill="#f1b31c"/><rect x="5.600" y="6.300" width=".9" height=".8" fill="#2f6fe0"/></g>
<g transform="translate(159.60 270.45) scale(1 1.077)"><path d="M0.200 4.700h1.400v3.600h-1.400z" fill="#939393"/><rect x="1.400" y="0.400" width="8" height="8.400" fill="#f1f1f1"/><rect x="1.400" y="0.350" width="8" height="1.200" fill="#a25640"/><path d="M1.400 8.250h8" stroke="#808080" stroke-width="1.100"/><path d="M8.900 1.550v7.250" stroke="#868686" stroke-width="1"/><path d="M1.700 1.550v6.200" stroke="#c2c2c2" stroke-width=".6"/><path d="M2.750 6.500v-3.900h4.300v3.900" fill="#f7f9fc" stroke="#c4a67e" stroke-width=".7"/><path d="M3.300 5.250h3.300" stroke="#9a7d52" stroke-width=".45"/><ellipse cx="5.200" cy="5" rx="1.250" ry="1.350" fill="#f1b31c"/><rect x="5.600" y="6.300" width=".9" height=".8" fill="#2f6fe0"/></g>
<g transform="translate(159.60 283.03) scale(1 1.077)"><path d="M0.200 4.700h1.400v3.600h-1.400z" fill="#939393"/><rect x="1.400" y="0.400" width="8" height="8.400" fill="#f1f1f1"/><rect x="1.400" y="0.350" width="8" height="1.200" fill="#a25640"/><path d="M1.400 8.250h8" stroke="#808080" stroke-width="1.100"/><path d="M8.900 1.550v7.250" stroke="#868686" stroke-width="1"/><path d="M1.700 1.550v6.200" stroke="#c2c2c2" stroke-width=".6"/><path d="M2.750 6.500v-3.900h4.300v3.900" fill="#f7f9fc" stroke="#c4a67e" stroke-width=".7"/><path d="M3.300 5.250h3.300" stroke="#9a7d52" stroke-width=".45"/><ellipse cx="5.200" cy="5" rx="1.250" ry="1.350" fill="#f1b31c"/><rect x="5.600" y="6.300" width=".9" height=".8" fill="#2f6fe0"/></g>
<g transform="translate(159.60 295.61) scale(1 1.077)"><path d="M0.200 4.700h1.400v3.600h-1.400z" fill="#939393"/><rect x="1.400" y="0.400" width="8" height="8.400" fill="#f1f1f1"/><rect x="1.400" y="0.350" width="8" height="1.200" fill="#a25640"/><path d="M1.400 8.250h8" stroke="#808080" stroke-width="1.100"/><path d="M8.900 1.550v7.250" stroke="#868686" stroke-width="1"/><path d="M1.700 1.550v6.200" stroke="#c2c2c2" stroke-width=".6"/><path d="M2.750 6.500v-3.900h4.300v3.900" fill="#f7f9fc" stroke="#c4a67e" stroke-width=".7"/><path d="M3.300 5.250h3.300" stroke="#9a7d52" stroke-width=".45"/><ellipse cx="5.200" cy="5" rx="1.250" ry="1.350" fill="#f1b31c"/><rect x="5.600" y="6.300" width=".9" height=".8" fill="#2f6fe0"/></g>
<g transform="translate(159.60 308.19) scale(1 1.077)"><path d="M0.200 4.700h1.400v3.600h-1.400z" fill="#939393"/><rect x="1.400" y="0.400" width="8" height="8.400" fill="#f1f1f1"/><rect x="1.400" y="0.350" width="8" height="1.200" fill="#a25640"/><path d="M1.400 8.250h8" stroke="#808080" stroke-width="1.100"/><path d="M8.900 1.550v7.250" stroke="#868686" stroke-width="1"/><path d="M1.700 1.550v6.200" stroke="#c2c2c2" stroke-width=".6"/><path d="M2.750 6.500v-3.900h4.300v3.900" fill="#f7f9fc" stroke="#c4a67e" stroke-width=".7"/><path d="M3.300 5.250h3.300" stroke="#9a7d52" stroke-width=".45"/><ellipse cx="5.200" cy="5" rx="1.250" ry="1.350" fill="#f1b31c"/><rect x="5.600" y="6.300" width=".9" height=".8" fill="#2f6fe0"/></g>
<g transform="translate(159.60 320.77) scale(1 1.077)"><path d="M0.200 4.700h1.400v3.600h-1.400z" fill="#939393"/><rect x="1.400" y="0.400" width="8" height="8.400" fill="#f1f1f1"/><rect x="1.400" y="0.350" width="8" height="1.200" fill="#a25640"/><path d="M1.400 8.250h8" stroke="#808080" stroke-width="1.100"/><path d="M8.900 1.550v7.250" stroke="#868686" stroke-width="1"/><path d="M1.700 1.550v6.200" stroke="#c2c2c2" stroke-width=".6"/><path d="M2.750 6.500v-3.900h4.300v3.900" fill="#f7f9fc" stroke="#c4a67e" stroke-width=".7"/><path d="M3.300 5.250h3.300" stroke="#9a7d52" stroke-width=".45"/><ellipse cx="5.200" cy="5" rx="1.250" ry="1.350" fill="#f1b31c"/><rect x="5.600" y="6.300" width=".9" height=".8" fill="#2f6fe0"/></g>
<g transform="translate(159.60 333.35) scale(1 1.077)"><path d="M0.200 4.700h1.400v3.600h-1.400z" fill="#939393"/><rect x="1.400" y="0.400" width="8" height="8.400" fill="#f1f1f1"/><rect x="1.400" y="0.350" width="8" height="1.200" fill="#a25640"/><path d="M1.400 8.250h8" stroke="#808080" stroke-width="1.100"/><path d="M8.900 1.550v7.250" stroke="#868686" stroke-width="1"/><path d="M1.700 1.550v6.200" stroke="#c2c2c2" stroke-width=".6"/><path d="M2.750 6.500v-3.900h4.300v3.900" fill="#f7f9fc" stroke="#c4a67e" stroke-width=".7"/><path d="M3.300 5.250h3.300" stroke="#9a7d52" stroke-width=".45"/><ellipse cx="5.200" cy="5" rx="1.250" ry="1.350" fill="#f1b31c"/><rect x="5.600" y="6.300" width=".9" height=".8" fill="#2f6fe0"/></g>
<g transform="translate(159.60 345.93) scale(1 1.077)"><path d="M0.200 4.700h1.400v3.600h-1.400z" fill="#939393"/><rect x="1.400" y="0.400" width="8" height="8.400" fill="#f1f1f1"/><rect x="1.400" y="0.350" width="8" height="1.200" fill="#a25640"/><path d="M1.400 8.250h8" stroke="#808080" stroke-width="1.100"/><path d="M8.900 1.550v7.250" stroke="#868686" stroke-width="1"/><path d="M1.700 1.550v6.200" stroke="#c2c2c2" stroke-width=".6"/><path d="M2.750 6.500v-3.900h4.300v3.900" fill="#f7f9fc" stroke="#c4a67e" stroke-width=".7"/><path d="M3.300 5.250h3.300" stroke="#9a7d52" stroke-width=".45"/><ellipse cx="5.200" cy="5" rx="1.250" ry="1.350" fill="#f1b31c"/><rect x="5.600" y="6.300" width=".9" height=".8" fill="#2f6fe0"/></g>
<g transform="translate(159.60 358.51) scale(1 1.077)"><path d="M0.200 4.700h1.400v3.600h-1.400z" fill="#939393"/><rect x="1.400" y="0.400" width="8" height="8.400" fill="#f1f1f1"/><rect x="1.400" y="0.350" width="8" height="1.200" fill="#a25640"/><path d="M1.400 8.250h8" stroke="#808080" stroke-width="1.100"/><path d="M8.900 1.550v7.250" stroke="#868686" stroke-width="1"/><path d="M1.700 1.550v6.200" stroke="#c2c2c2" stroke-width=".6"/><path d="M2.750 6.500v-3.900h4.300v3.900" fill="#f7f9fc" stroke="#c4a67e" stroke-width=".7"/><path d="M3.300 5.250h3.300" stroke="#9a7d52" stroke-width=".45"/><ellipse cx="5.200" cy="5" rx="1.250" ry="1.350" fill="#f1b31c"/><rect x="5.600" y="6.300" width=".9" height=".8" fill="#2f6fe0"/></g>
<g transform="translate(159.60 371.09) scale(1 1.077)"><path d="M0.200 4.700h1.400v3.600h-1.400z" fill="#939393"/><rect x="1.400" y="0.400" width="8" height="8.400" fill="#f1f1f1"/><rect x="1.400" y="0.350" width="8" height="1.200" fill="#a25640"/><path d="M1.400 8.250h8" stroke="#808080" stroke-width="1.100"/><path d="M8.900 1.550v7.250" stroke="#868686" stroke-width="1"/><path d="M1.700 1.550v6.200" stroke="#c2c2c2" stroke-width=".6"/><path d="M2.750 6.500v-3.900h4.300v3.900" fill="#f7f9fc" stroke="#c4a67e" stroke-width=".7"/><path d="M3.300 5.250h3.300" stroke="#9a7d52" stroke-width=".45"/><ellipse cx="5.200" cy="5" rx="1.250" ry="1.350" fill="#f1b31c"/><rect x="5.600" y="6.300" width=".9" height=".8" fill="#2f6fe0"/></g>
<g transform="translate(159.60 383.67) scale(1 1.077)"><path d="M0.200 4.700h1.400v3.600h-1.400z" fill="#939393"/><rect x="1.400" y="0.400" width="8" height="8.400" fill="#f1f1f1"/><rect x="1.400" y="0.350" width="8" height="1.200" fill="#a25640"/><path d="M1.400 8.250h8" stroke="#808080" stroke-width="1.100"/><path d="M8.900 1.550v7.250" stroke="#868686" stroke-width="1"/><path d="M1.700 1.550v6.200" stroke="#c2c2c2" stroke-width=".6"/><path d="M2.750 6.500v-3.900h4.300v3.900" fill="#f7f9fc" stroke="#c4a67e" stroke-width=".7"/><path d="M3.300 5.250h3.300" stroke="#9a7d52" stroke-width=".45"/><ellipse cx="5.200" cy="5" rx="1.250" ry="1.350" fill="#f1b31c"/><rect x="5.600" y="6.300" width=".9" height=".8" fill="#2f6fe0"/></g>
<g transform="translate(159.60 396.25) scale(1 1.077)"><path d="M0.200 4.700h1.400v3.600h-1.400z" fill="#939393"/><rect x="1.400" y="0.400" width="8" height="8.400" fill="#f1f1f1"/><rect x="1.400" y="0.350" width="8" height="1.200" fill="#a25640"/><path d="M1.400 8.250h8" stroke="#808080" stroke-width="1.100"/><path d="M8.900 1.550v7.250" stroke="#868686" stroke-width="1"/><path d="M1.700 1.550v6.200" stroke="#c2c2c2" stroke-width=".6"/><path d="M2.750 6.500v-3.900h4.300v3.900" fill="#f7f9fc" stroke="#c4a67e" stroke-width=".7"/><path d="M3.300 5.250h3.300" stroke="#9a7d52" stroke-width=".45"/><ellipse cx="5.200" cy="5" rx="1.250" ry="1.350" fill="#f1b31c"/><rect x="5.600" y="6.300" width=".9" height=".8" fill="#2f6fe0"/></g>
<g transform="translate(1.40 3.85) scale(1 1.11)"><path d="M0.200 4.700h1.400v3.600h-1.400z" fill="#939393"/><rect x="1.400" y="0.400" width="8" height="8.400" fill="#f1f1f1"/><rect x="1.400" y="0.350" width="8" height="1.200" fill="#a25640"/><path d="M1.400 8.250h8" stroke="#808080" stroke-width="1.100"/><path d="M8.900 1.550v7.250" stroke="#868686" stroke-width="1"/><path d="M1.700 1.550v6.200" stroke="#c2c2c2" stroke-width=".6"/><path d="M2.750 6.500v-3.900h4.300v3.900" fill="#f7f9fc" stroke="#c4a67e" stroke-width=".7"/><path d="M3.300 5.250h3.300" stroke="#9a7d52" stroke-width=".45"/><ellipse cx="5.200" cy="5" rx="1.250" ry="1.350" fill="#f1b31c"/><rect x="5.600" y="6.300" width=".9" height=".8" fill="#2f6fe0"/></g>
<g transform="translate(3.60 53.60) scale(1 1.04)"><path d="M0.200 4.700h1.400v3.600h-1.400z" fill="#939393"/><rect x="1.400" y="0.400" width="8" height="8.400" fill="#f1f1f1"/><rect x="1.400" y="0.350" width="8" height="1.200" fill="#a25640"/><path d="M1.400 8.250h8" stroke="#808080" stroke-width="1.100"/><path d="M8.900 1.550v7.250" stroke="#868686" stroke-width="1"/><path d="M1.700 1.550v6.200" stroke="#c2c2c2" stroke-width=".6"/><path d="M2.750 6.500v-3.900h4.300v3.900" fill="#f7f9fc" stroke="#c4a67e" stroke-width=".7"/><path d="M3.300 5.250h3.300" stroke="#9a7d52" stroke-width=".45"/><ellipse cx="5.200" cy="5" rx="1.250" ry="1.350" fill="#f1b31c"/><rect x="5.600" y="6.300" width=".9" height=".8" fill="#2f6fe0"/></g></svg>
</body></html>
